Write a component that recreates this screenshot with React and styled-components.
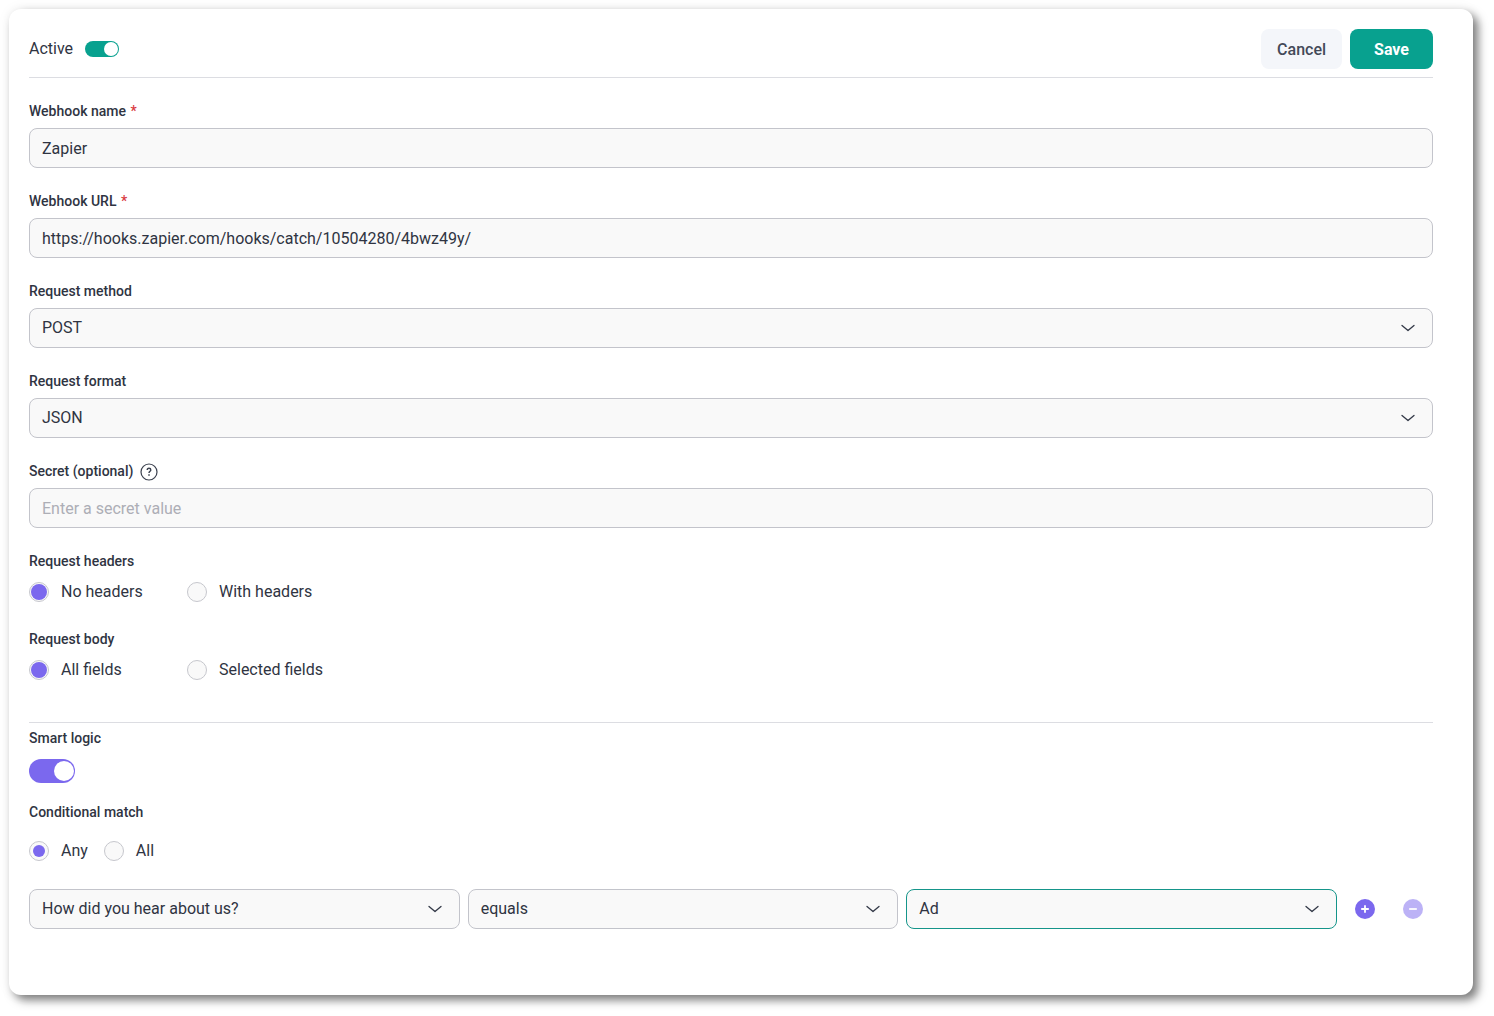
import React, { useState } from 'react';
import styled, { createGlobalStyle, css } from 'styled-components';

const GlobalStyle = createGlobalStyle`
    *, *::before, *::after {
        box-sizing: border-box;
    }
    body {
        margin: 0;
        background-color: #ffffff;
        color: #2f3442;
        font-family: Roboto, "Liberation Sans", sans-serif;
        font-size: 16px;
        line-height: 20px;
    }
    button, input, select {
        font: inherit;
        color: inherit;
    }
`;

const Card = styled.form`
    margin: 9px 21px 21px 9px;
    padding: 20px 40px 66px 20px;
    border-radius: 12px;
    background-color: #ffffff;
    box-shadow: 5px 5px 10px 0 #7c7c7c, 0 0 14px 0 rgba(0, 0, 0, 0.06);
`;

const Header = styled.header`
    display: flex;
    align-items: center;
    gap: 8px;
    padding-bottom: 8px;
    border-bottom: 1px solid #dcdde2;
`;

const ActiveLabel = styled.label`
    display: flex;
    align-items: center;
    gap: 12px;
    margin-right: auto;
`;

const Button = styled.button`
    height: 40px;
    padding: 2px ${props => (props.$primary ? '24px' : '16px')} 0;
    border: 0;
    border-radius: 8px;
    font-weight: ${props => (props.$primary ? 700 : 500)};
    background-color: ${props => (props.$primary ? '#08a18f' : '#f4f6fa')};
    color: ${props => (props.$primary ? '#ffffff' : '#434958')};
    cursor: pointer;
`;

const toggleSizes = {
    small: css`
        width: 34px;
        height: 16px;
        padding: 1px;
        &::before { width: 14px; }
    `,
    large: css`
        width: 46px;
        height: 24px;
        padding: 2px 1px;
        &::before { width: 20px; }
    `,
};

const Toggle = styled.input.attrs({ type: 'checkbox', role: 'switch' })`
    appearance: none;
    display: flex;
    margin: 0;
    border-radius: 12px;
    background-color: #c3c4cc;
    cursor: pointer;
    &::before {
        content: '';
        border-radius: 50%;
        background-color: #ffffff;
    }
    &:checked {
        justify-content: flex-end;
        background-color: ${props => props.$color};
    }
    ${props => toggleSizes[props.$size]}
`;

const Section = styled.section`
    display: flex;
    flex-direction: column;
    gap: 24px;
    padding: 24px 0 38px;
    border-bottom: 1px solid #dcdde2;
`;

const Field = styled.div`
    display: flex;
    flex-direction: column;
    gap: 8px;
`;

const labelText = css`
    font-size: 14px;
    font-weight: 500;
    line-height: 18px;
`;

const LabelRow = styled.div`
    display: flex;
    align-items: center;
    gap: 7px;
    height: 18px;
`;

const Label = styled.label`
    ${labelText}
`;

const Required = styled.span`
    margin-left: 1px;
    color: #d93a3f;
`;

const HelpButton = styled.button`
    display: flex;
    padding: 2px 0 0;
    border: 0;
    background: none;
    cursor: pointer;
`;

const box = css`
    width: 100%;
    height: 40px;
    padding: 0 12px;
    border: 1px solid ${props => (props.$active ? '#15958a' : '#c3c4cb')};
    border-radius: 8px;
    background-color: #f9f9f9;
    outline: none;
    &:focus {
        border-color: #15958a;
    }
`;

const TextInput = styled.input`
    ${box}
    &::placeholder {
        color: #adaeb6;
        opacity: 1;
    }
`;

const SelectWrap = styled.div`
    display: grid;
    align-items: center;
    > * {
        grid-area: 1 / 1;
    }
    > svg {
        justify-self: end;
        margin-right: 17px;
        pointer-events: none;
    }
`;

const SelectBox = styled.select`
    ${box}
    appearance: none;
    padding-right: 40px;
`;

const Group = styled.fieldset`
    min-width: 0;
    margin: 0;
    padding: 0;
    border: 0;
`;

const Legend = styled.legend`
    ${labelText}
    padding: 0;
    margin-bottom: ${props => props.$gap}px;
`;

const Options = styled.div`
    display: flex;
    gap: 16px;
`;

const Option = styled.label`
    display: flex;
    align-items: center;
    gap: 12px;
    min-width: ${props => (props.$wide ? '142px' : '0')};
    height: 28px;
    cursor: pointer;
`;

const Radio = styled.input.attrs({ type: 'radio' })`
    appearance: none;
    display: grid;
    place-items: center;
    width: 20px;
    height: 20px;
    margin: 0;
    border: 1px solid #c6c7cd;
    border-radius: 50%;
    background-color: #f9f9f9;
    &:checked::before {
        content: '';
        width: ${props => props.$dot}px;
        height: ${props => props.$dot}px;
        border-radius: 50%;
        background-color: #7b68ee;
    }
`;

const Logic = styled.section`
    padding-top: 6px;
`;

const LogicToggle = styled.div`
    display: flex;
    flex-direction: column;
    gap: 12px;
    margin-bottom: 20px;
`;

const Conditions = styled.div`
    display: grid;
    grid-template-columns: repeat(3, 1fr) 40px 40px;
    gap: 8px;
    margin-top: 24px;
`;

const RoundButton = styled.button`
    display: flex;
    align-items: center;
    justify-content: center;
    height: 40px;
    padding: 0;
    border: 0;
    background: none;
    color: #7b68ee;
    cursor: pointer;
    &:disabled {
        opacity: 0.5;
        cursor: default;
    }
`;

const Chevron = () => (
    <svg width="16" height="10" viewBox="0 0 16 10" fill="none" aria-hidden="true">
        <path d="M2 2.5 L8 7.5 L14 2.5" stroke="#333947" strokeWidth="1.3" strokeLinecap="round" strokeLinejoin="round" />
    </svg>
);

const HelpIcon = () => (
    <svg width="18" height="18" viewBox="0 0 18 18" fill="none" stroke="#3a404e" aria-hidden="true">
        <circle cx="9" cy="9" r="8" strokeWidth="1.2" />
        <path d="M7.2 7.1 C7.2 5.9 8 5.3 9 5.3 C10.1 5.3 10.8 5.9 10.8 6.9 C10.8 8.3 9 8.4 9 10.1" strokeWidth="1.4" />
        <path d="M9 11.2 V12.7" strokeWidth="1.5" />
    </svg>
);

const SignIcon = ({ plus }) => (
    <svg width="20" height="20" viewBox="0 0 20 20" aria-hidden="true">
        <circle cx="10" cy="10" r="10" fill="currentColor" />
        <path d={plus ? 'M6.2 10 H13.8 M10 6.2 V13.8' : 'M6.2 10 H13.8'} stroke="#ffffff" strokeWidth="1.8" />
    </svg>
);

function Select({ options, ...rest }) {
    return (
        <SelectWrap>
            <SelectBox {...rest}>
                {options.map(option => <option key={option}>{option}</option>)}
            </SelectBox>
            <Chevron />
        </SelectWrap>
    );
}

function RadioGroup({ title, name, options, dot = 16, gap = 8, wide }) {
    const [value, setValue] = useState(options[0]);

    return (
        <Group>
            <Legend $gap={gap}>{title}</Legend>
            <Options>
                {options.map(option => (
                    <Option key={option} $wide={wide}>
                        <Radio name={name} $dot={dot} checked={value === option} onChange={() => setValue(option)} />
                        {option}
                    </Option>
                ))}
            </Options>
        </Group>
    );
}

function App() {
    return (
        <>
            <GlobalStyle />
            <Card onSubmit={e => e.preventDefault()}>
                <Header>
                    <ActiveLabel>
                        Active
                        <Toggle $size="small" $color="#08a18f" defaultChecked />
                    </ActiveLabel>
                    <Button type="button">Cancel</Button>
                    <Button type="submit" $primary>Save</Button>
                </Header>

                <Section>
                    <Field>
                        <Label htmlFor="name">Webhook name <Required>*</Required></Label>
                        <TextInput id="name" type="text" defaultValue="Zapier" />
                    </Field>
                    <Field>
                        <Label htmlFor="url">Webhook URL <Required>*</Required></Label>
                        <TextInput id="url" type="url" defaultValue="https://hooks.zapier.com/hooks/catch/10504280/4bwz49y/" />
                    </Field>
                    <Field>
                        <Label htmlFor="method">Request method</Label>
                        <Select id="method" options={['POST']} />
                    </Field>
                    <Field>
                        <Label htmlFor="format">Request format</Label>
                        <Select id="format" options={['JSON']} />
                    </Field>
                    <Field>
                        <LabelRow>
                            <Label htmlFor="secret">Secret (optional)</Label>
                            <HelpButton type="button" aria-label="About the secret"><HelpIcon /></HelpButton>
                        </LabelRow>
                        <TextInput id="secret" type="text" placeholder="Enter a secret value" />
                    </Field>
                    <RadioGroup title="Request headers" name="headers" options={['No headers', 'With headers']} wide />
                    <RadioGroup title="Request body" name="body" options={['All fields', 'Selected fields']} wide />
                </Section>

                <Logic>
                    <LogicToggle>
                        <Label htmlFor="logic">Smart logic</Label>
                        <Toggle id="logic" $size="large" $color="#7b68ee" defaultChecked />
                    </LogicToggle>
                    <RadioGroup title="Conditional match" name="match" options={['Any', 'All']} dot={12} gap={16} />
                    <Conditions>
                        <Select aria-label="Question" options={['How did you hear about us?']} />
                        <Select aria-label="Operator" options={['equals']} />
                        <Select aria-label="Answer" options={['Ad']} $active />
                        <RoundButton type="button" aria-label="Add condition"><SignIcon plus /></RoundButton>
                        <RoundButton type="button" aria-label="Remove condition" disabled><SignIcon /></RoundButton>
                    </Conditions>
                </Logic>
            </Card>
        </>
    );
}

export default App;
